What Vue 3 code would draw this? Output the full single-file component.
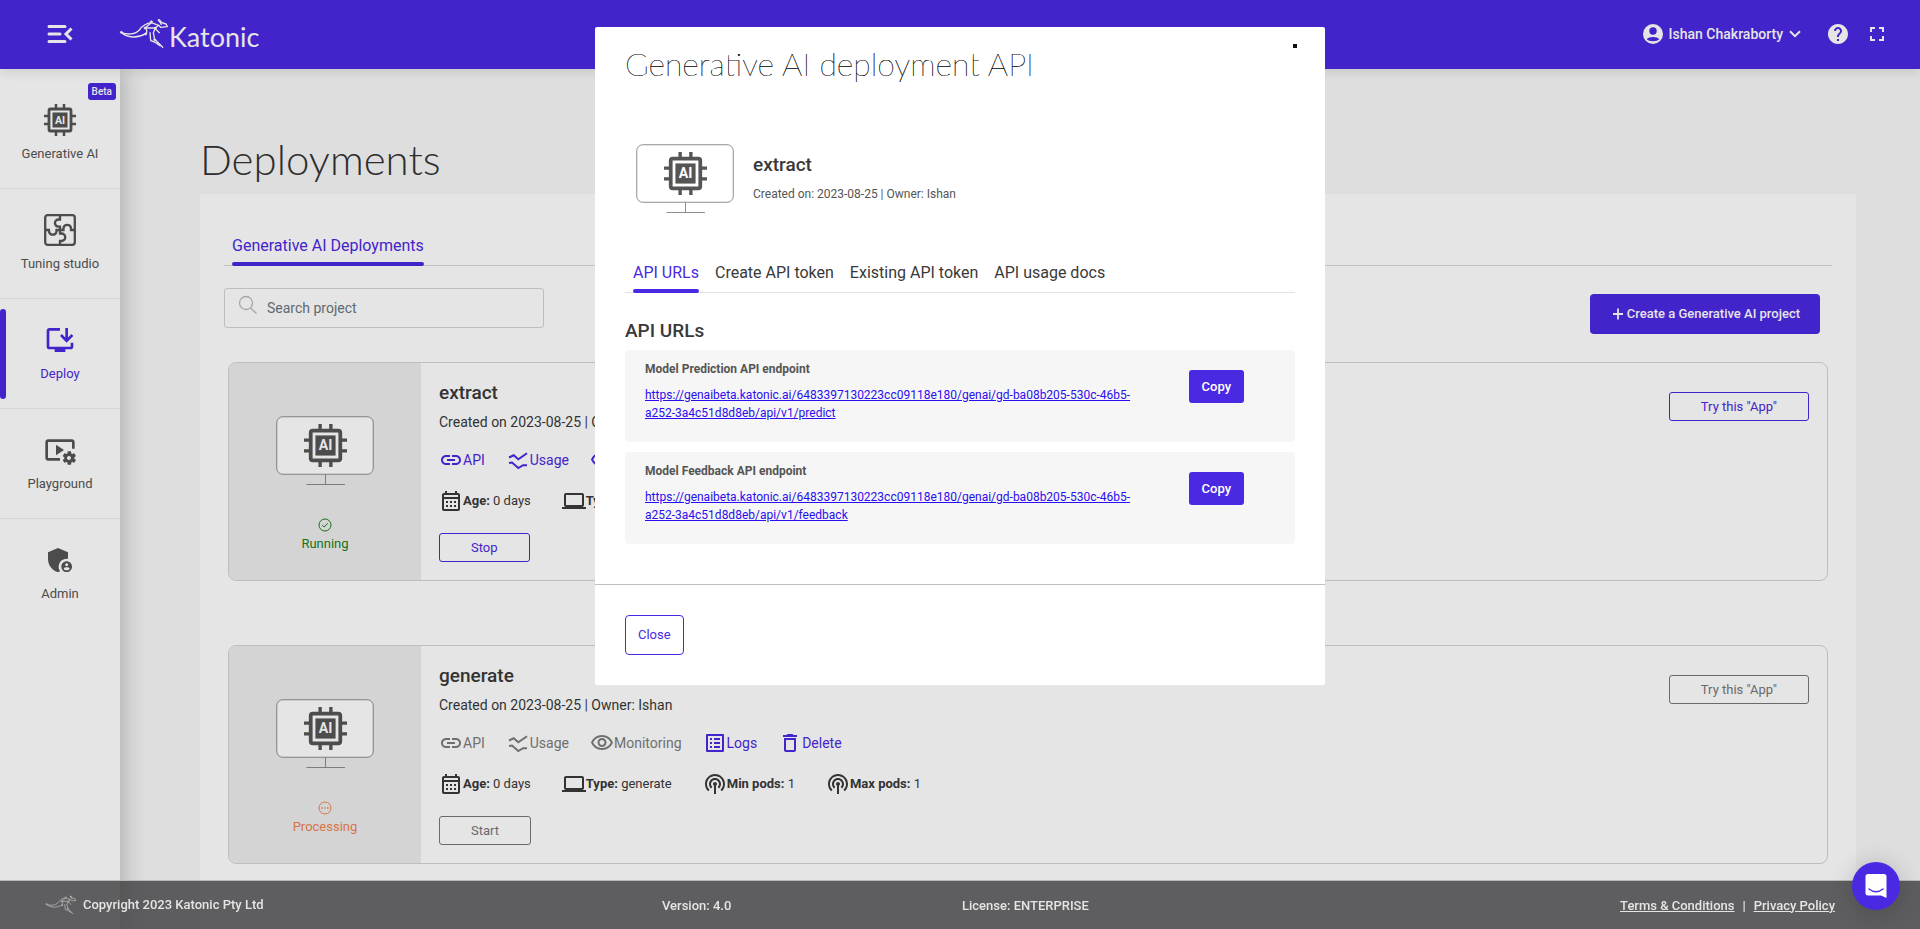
<script setup>
import { h, ref } from 'vue'

const paths = {
  link: ['M3.9 12c0-1.71 1.39-3.1 3.1-3.1h4V7H7c-2.76 0-5 2.24-5 5s2.24 5 5 5h4v-1.9H7c-1.71 0-3.1-1.39-3.1-3.1zM8 13h8v-2H8v2zm9-6h-4v1.9h4c1.71 0 3.1 1.39 3.1 3.1s-1.39 3.1-3.1 3.1h-4V17h4c2.76 0 5-2.24 5-5s-2.24-5-5-5z'],
  eye: ['M12 6c3.79 0 7.17 2.13 8.82 5.5C19.17 14.87 15.79 17 12 17s-7.17-2.13-8.82-5.5C4.83 8.13 8.21 6 12 6m0-2C7 4 2.73 7.11 1 11.5 2.73 15.89 7 19 12 19s9.27-3.11 11-7.5C21.27 7.11 17 4 12 4zm0 5c1.38 0 2.5 1.12 2.5 2.5S13.38 14 12 14s-2.5-1.12-2.5-2.5S10.62 9 12 9m0-2c-2.48 0-4.5 2.02-4.5 4.5S9.52 16 12 16s4.5-2.02 4.5-4.5S14.48 7 12 7z'],
  logs: ['M19 5v14H5V5h14m1.1-2H3.9c-.5 0-.9.4-.9.9v16.2c0 .4.4.9.9.9h16.2c.4 0 .9-.5.9-.9V3.9c0-.5-.5-.9-.9-.9zM11 7h6v2h-6V7zm0 4h6v2h-6v-2zm0 4h6v2h-6zM7 7h2v2H7zm0 4h2v2H7zm0 4h2v2H7z'],
  trash: ['M6 19c0 1.1.9 2 2 2h8c1.1 0 2-.9 2-2V7H6v12zM8 9h8v10H8V9zm7.5-5l-1-1h-5l-1 1H5v2h14V4z'],
  calendar: ['M19 4h-1V2h-2v2H8V2H6v2H5c-1.11 0-1.99.9-1.99 2L3 20c0 1.1.89 2 2 2h14c1.1 0 2-.9 2-2V6c0-1.1-.9-2-2-2zm0 16H5V10h14v10zm0-12H5V6h14v2zM9 14H7v-2h2v2zm4 0h-2v-2h2v2zm4 0h-2v-2h2v2zm-8 4H7v-2h2v2zm4 0h-2v-2h2v2zm4 0h-2v-2h2v2z'],
  laptop: ['M20 18c1.1 0 1.99-.9 1.99-2L22 6c0-1.1-.9-2-2-2H4c-1.1 0-2 .9-2 2v10c0 1.1.9 2 2 2H0v2h24v-2h-4zM4 6h16v10H4V6z'],
  pods: ['M14 12c0 .74-.4 1.38-1 1.72V22h-2v-8.28c-.6-.35-1-.98-1-1.72 0-1.1.9-2 2-2s2 .9 2 2zm-2-6c-3.31 0-6 2.69-6 6 0 1.74.75 3.31 1.94 4.4l1.42-1.42C8.53 14.25 8 13.19 8 12c0-2.21 1.79-4 4-4s4 1.79 4 4c0 1.19-.53 2.25-1.36 2.98l1.42 1.42C17.25 15.31 18 13.74 18 12c0-3.31-2.69-6-6-6zm0-4C6.48 2 2 6.48 2 12c0 2.85 1.2 5.41 3.11 7.24l1.42-1.42C4.98 16.36 4 14.29 4 12c0-4.41 3.59-8 8-8s8 3.59 8 8c0 2.29-.98 4.36-2.53 5.82l1.42 1.42C20.8 17.41 22 14.85 22 12c0-5.52-4.48-10-10-10z'],
  help: ['M12 2C6.48 2 2 6.48 2 12s4.48 10 10 10 10-4.48 10-10S17.52 2 12 2zm1 17h-2v-2h2v2zm2.07-7.75l-.9.92C13.45 12.9 13 13.5 13 15h-2v-.5c0-1.1.45-2.1 1.17-2.83l1.24-1.26c.37-.36.59-.86.59-1.41 0-1.1-.9-2-2-2s-2 .9-2 2H8c0-2.21 1.79-4 4-4s4 1.79 4 4c0 .88-.36 1.68-.93 2.25z'],
  fullscreen: ['M7 14H5v5h5v-2H7v-3zm-2-4h2V7h3V5H5v5zm12 7h-3v2h5v-5h-2v3zM14 5v2h3v3h2V5h-5z'],
  deploy: [
    'M20 17H4V5h8V3H4c-1.1 0-2 .9-2 2v12c0 1.1.9 2 2 2h4v2h8v-2h4c1.1 0 2-.9 2-2v-3h-2v3z',
    'M17 14l5-5-1.41-1.41L18 10.17V3h-2v7.17l-2.59-2.58L12 9z',
  ],
  playground: [
    'M3 6h18v5h2V6c0-1.1-.9-2-2-2H3c-1.1 0-2 .9-2 2v12c0 1.1.9 2 2 2h9v-2H3V6z',
    'M15 12l-6-4v8z',
    'M22.71 18.43c.03-.29.04-.58.01-.86l1.07-.85c.1-.08.12-.21.06-.32l-1.03-1.79c-.06-.11-.19-.15-.31-.11l-1.28.5c-.23-.17-.48-.31-.75-.42l-.2-1.36c-.01-.12-.12-.21-.24-.21h-2.07c-.12 0-.23.09-.25.21l-.2 1.36c-.26.11-.51.26-.74.42l-1.28-.5c-.12-.05-.25 0-.31.11l-1.03 1.79c-.06.11-.04.24.06.32l1.07.86c-.03.29-.04.58-.01.86l-1.07.85c-.1.08-.12.21-.06.32l1.03 1.79c.06.11.19.15.31.11l1.27-.5c.23.17.48.31.75.42l.2 1.36c.02.12.12.21.25.21h2.07c.12 0 .23-.09.25-.21l.2-1.36c.26-.11.51-.26.74-.42l1.28.5c.12.05.25 0 .31-.11l1.03-1.79c.06-.11.04-.24-.06-.32l-1.07-.86zM18.75 19.5c-.83 0-1.5-.67-1.5-1.5s.67-1.5 1.5-1.5 1.5.67 1.5 1.5-.67 1.5-1.5 1.5z',
  ],
  admin: [
    'M17 11c.34 0 .67.04 1 .09V6.27L10.5 3 3 6.27v4.91c0 4.54 3.2 8.79 7.5 9.82.55-.13 1.08-.32 1.6-.55-.69-.98-1.1-2.17-1.1-3.45 0-3.31 2.69-6 6-6z',
    'M17 13c-2.21 0-4 1.79-4 4s1.79 4 4 4 4-1.79 4-4-1.79-4-4-4zm0 1.38c.62 0 1.12.51 1.12 1.12s-.51 1.12-1.12 1.12-1.12-.51-1.12-1.12.5-1.12 1.12-1.12zm0 5.37c-.93 0-1.74-.46-2.24-1.17.05-.72 1.51-1.08 2.24-1.08s2.19.36 2.24 1.08c-.5.71-1.31 1.17-2.24 1.17z',
  ],
}

const strokes = {
  usage: { width: 2, d: 'M3 9.5L7.7 7.3L12.3 11.3L21 5.3M3 15L6 14.6L12.3 20L17 17.2H21' },
}

const Icon = (props) => {
  const stroke = strokes[props.name]
  const children = stroke
    ? [h('path', { d: stroke.d, fill: 'none', stroke: 'currentColor', 'stroke-width': stroke.width })]
    : paths[props.name].map((d) => h('path', { d }))
  return h(
    'svg',
    { viewBox: '0 0 24 24', width: props.size || 24, height: props.size || 24, fill: 'currentColor', 'aria-hidden': 'true' },
    children,
  )
}
Icon.props = ['name', 'size']

const chipShapes = () => [
  h('path', {
    d: 'M12 0V4M20 0V4M12 28V32M20 28V32M0 12H4M0 20H4M28 12H32M28 20H32',
    stroke: 'currentColor',
    'stroke-width': 2.5,
    fill: 'none',
  }),
  h('rect', { x: 5, y: 5, width: 22, height: 22, rx: 1.5, fill: 'none', stroke: 'currentColor', 'stroke-width': 2.8 }),
  h('rect', { x: 8.5, y: 8.5, width: 15, height: 15, fill: 'currentColor' }),
  h(
    'text',
    { x: 16, y: 19.6, 'text-anchor': 'middle', 'font-size': 10.5, 'font-weight': 700, 'font-family': 'Roboto, sans-serif', fill: '#fff' },
    'AI',
  ),
]

const Chip = () => h('svg', { viewBox: '0 0 32 32', width: 32, height: 32, 'aria-hidden': 'true' }, chipShapes())

const Monitor = () =>
  h('svg', { viewBox: '0 0 98 70', width: 98, height: 70, 'aria-hidden': 'true' }, [
    h('rect', { x: 0.75, y: 0.75, width: 96.5, height: 57.5, rx: 6, fill: '#fff', stroke: '#8c8c8c' }),
    h('path', { d: 'M49.5 58V68.5M30.5 68.5H69', stroke: '#8c8c8c', fill: 'none' }),
    h('svg', { x: 28, y: 8, width: 43, height: 43, viewBox: '0 0 32 32' }, chipShapes()),
  ])

const Kangaroo = (props) =>
  h('svg', { viewBox: '27 18 150 93', width: props.width, fill: 'none', stroke: 'currentColor', 'stroke-width': 4, 'stroke-linecap': 'round', 'stroke-linejoin': 'round', 'aria-hidden': 'true' }, [
    h('path', { d: 'M33 61C52 69 76 68 88 54C98 40 108 34 124 32L146 40' }),
    h('path', { d: 'M33 61C52 79 84 79 107 65' }),
    h('path', { d: 'M124 32L105 48H136L146 40L152 46L172 44L168 36L158 33L147 25L154 37' }),
    h('path', { d: 'M105 48C112 54 112 60 107 65M136 48L130 62L134 82L158 106M120 62L122 86L134 90L150 101M136 50L148 62' }),
    h('g', { fill: 'currentColor', 'stroke-width': 2 }, [
      h('circle', { cx: 34, cy: 61, r: 3 }),
      h('circle', { cx: 124, cy: 29, r: 3 }),
      h('circle', { cx: 105, cy: 48, r: 3 }),
      h('circle', { cx: 107, cy: 66, r: 3 }),
      h('circle', { cx: 136, cy: 48, r: 3 }),
      h('circle', { cx: 134, cy: 83, r: 3 }),
      h('circle', { cx: 147, cy: 25, r: 3 }),
    ]),
  ])
Kangaroo.props = ['width']

const menu = [
  { label: 'Generative AI', icon: 'chip', badge: 'Beta' },
  { label: 'Tuning studio', icon: 'puzzle' },
  { label: 'Deploy', icon: 'deploy', active: true },
  { label: 'Playground', icon: 'playground' },
  { label: 'Admin', icon: 'admin' },
]

const deployments = [
  { name: 'extract', running: true, status: 'Running', action: 'Stop' },
  { name: 'generate', running: false, status: 'Processing', action: 'Start' },
]

const actions = [
  { label: 'API', icon: 'link', needsRun: true },
  { label: 'Usage', icon: 'usage', needsRun: true },
  { label: 'Monitoring', icon: 'eye', needsRun: true },
  { label: 'Logs', icon: 'logs' },
  { label: 'Delete', icon: 'trash' },
]

const facts = (d) => [
  { label: 'Age:', value: '0 days', icon: 'calendar' },
  { label: 'Type:', value: d.name, icon: 'laptop' },
  { label: 'Min pods:', value: '1', icon: 'pods' },
  { label: 'Max pods:', value: '1', icon: 'pods' },
]

const tabs = ['API URLs', 'Create API token', 'Existing API token', 'API usage docs']
const base = 'https://genaibeta.katonic.ai/6483397130223cc09118e180/genai/gd-ba08b205-530c-46b5-a252-3a4c51d8d8eb/api/v1/'
const endpoints = [
  { title: 'Model Prediction API endpoint', url: base + 'predict' },
  { title: 'Model Feedback API endpoint', url: base + 'feedback' },
]

const activeTab = ref(tabs[0])
const open = ref(true)
const search = ref('')
</script>

<template>
  <div class="app">
    <header class="topbar">
      <button class="plain menu-toggle" type="button" aria-label="Toggle menu">
        <svg viewBox="0 0 26 20" width="26" height="20" fill="none" stroke="currentColor" stroke-width="3" stroke-linecap="round">
          <path d="M2 2.5H18M2 10H13M2 17.5H18" />
          <path d="M24.500 4.500L19 10L24.500 15.500" stroke-linecap="butt" />
        </svg>
      </button>
      <a class="logo" href="#">
        <Kangaroo :width="50" />
        <span>Katonic</span>
      </a>
      <div class="tools">
        <button class="plain user" type="button">
          <svg viewBox="0 0 24 24" width="24" height="24" aria-hidden="true">
            <circle cx="12" cy="12" r="10" fill="#fff" />
            <circle cx="12" cy="9" r="3.7" fill="#4b29e2" />
            <path d="M5.8 17.2C7.5 14.2 16.5 14.2 18.2 17.2C16.6 19.8 7.4 19.8 5.8 17.2Z" fill="#4b29e2" />
          </svg>
          <span>Ishan Chakraborty</span>
          <svg viewBox="0 0 12 8" width="12" height="8" fill="none" stroke="currentColor" stroke-width="2" aria-hidden="true">
            <path d="M1 1.200L6 6.200L11 1.200" />
          </svg>
        </button>
        <button class="plain help" type="button" aria-label="Help"><Icon name="help" /></button>
        <button class="plain" type="button" aria-label="Full screen"><Icon name="fullscreen" /></button>
      </div>
    </header>

    <div class="body">
      <nav class="sidebar">
        <a v-for="m in menu" :key="m.label" href="#" class="nav-item" :class="{ active: m.active }">
          <span v-if="m.badge" class="badge">{{ m.badge }}</span>
          <Chip v-if="m.icon === 'chip'" />
          <svg v-else-if="m.icon === 'puzzle'" viewBox="0 0 32 32" width="32" height="32" fill="none" stroke="currentColor" stroke-width="2.300" aria-hidden="true">
            <rect x="1.200" y="1.200" width="29.600" height="29.600" rx="2.500" />
            <path d="M16 1V5.500H14.500A3.600 3.600 0 0 0 14.500 12.700H16V16H12.500V17.500A3.800 3.800 0 0 1 5 17.500V16H1" />
            <path d="M16 31V27H17.500A3.600 3.600 0 0 0 17.500 19.500H16V16H19.500V14A3.800 3.800 0 0 1 27 14V16H31" />
          </svg>
          <Icon v-else :name="m.icon" :size="32" />
          <span>{{ m.label }}</span>
        </a>
      </nav>

      <main class="content">
        <h1>Deployments</h1>
        <section class="panel">
          <div class="tabs page-tabs">
            <button class="tab active" type="button">Generative AI Deployments</button>
          </div>
          <div class="toolbar">
            <label class="search">
              <svg viewBox="0 0 20 20" width="20" height="20" fill="none" stroke="currentColor" stroke-width="1.300" aria-hidden="true">
                <circle cx="8" cy="8" r="6.500" />
                <path d="M12.500 13L18.500 18.500" />
              </svg>
              <input v-model="search" type="text" placeholder="Search project" aria-label="Search project" />
            </label>
            <button class="create" type="button">
              <svg viewBox="0 0 10 12" width="10" height="12" stroke="currentColor" stroke-width="1.800" aria-hidden="true">
                <path d="M0 6H10M5 .5V11.500" />
              </svg>
              Create a Generative AI project
            </button>
          </div>

          <article v-for="d in deployments" :key="d.name" class="card">
            <div class="preview">
              <Monitor />
              <div class="status" :class="d.running ? 'ok' : 'pending'">
                <svg viewBox="0 0 14 14" width="14" height="14" fill="none" stroke="currentColor" aria-hidden="true">
                  <circle cx="7" cy="7" r="6" />
                  <path v-if="d.running" d="M4.200 7.200L6.200 9L9.800 5.200" />
                  <path v-else d="M3.500 7H5M6.300 7H7.800M9.100 7H10.600" stroke-width="1.500" />
                </svg>
                {{ d.status }}
              </div>
            </div>
            <div class="info">
              <h2>{{ d.name }}</h2>
              <p class="meta">Created on 2023-08-25 | Owner: Ishan</p>
              <div class="actions">
                <button v-for="a in actions" :key="a.label" class="plain action" type="button" :disabled="a.needsRun && !d.running">
                  <Icon :name="a.icon" />{{ a.label }}
                </button>
              </div>
              <div class="facts">
                <span v-for="f in facts(d)" :key="f.label" class="fact">
                  <Icon :name="f.icon" /><span><b>{{ f.label }}</b> {{ f.value }}</span>
                </span>
              </div>
              <button class="outline" type="button" :class="{ muted: !d.running }">{{ d.action }}</button>
            </div>
            <button class="outline try" type="button" :disabled="!d.running">Try this "App"</button>
          </article>
        </section>
      </main>
    </div>

    <footer class="footer">
      <span class="copyright"><Kangaroo :width="32" />Copyright 2023 Katonic Pty Ltd</span>
      <span>Version: 4.0</span>
      <span>License: ENTERPRISE</span>
      <span class="legal"><a href="#">Terms &amp; Conditions</a><i>|</i><a href="#">Privacy Policy</a></span>
    </footer>

    <div v-if="open" class="overlay">
      <div class="modal" role="dialog" aria-modal="true" aria-labelledby="modal-title">
        <button class="plain dismiss" type="button" aria-label="Dismiss" @click="open = false"></button>
        <div class="modal-body">
          <h2 id="modal-title" class="modal-title">Generative AI deployment API</h2>
          <div class="summary">
            <Monitor />
            <div>
              <h3>extract</h3>
              <p>Created on: 2023-08-25 | Owner: Ishan</p>
            </div>
          </div>
          <div class="tabs">
            <button v-for="t in tabs" :key="t" class="tab" type="button" :class="{ active: t === activeTab }" @click="activeTab = t">{{ t }}</button>
          </div>
          <h3 class="section-title">API URLs</h3>
          <div v-for="e in endpoints" :key="e.title" class="endpoint">
            <div class="endpoint-text">
              <h4>{{ e.title }}</h4>
              <a :href="e.url">{{ e.url }}</a>
            </div>
            <button class="copy" type="button">Copy</button>
          </div>
        </div>
        <div class="modal-footer">
          <button class="close" type="button" @click="open = false">Close</button>
        </div>
      </div>
    </div>

    <button class="chat" type="button" aria-label="Open chat">
      <svg viewBox="0 0 24 26" width="24" height="26" aria-hidden="true">
        <path d="M4 1H20Q22.500 1 22.500 3.500V25L17 22.500H4Q1.500 22.500 1.500 20V3.500Q1.500 1 4 1Z" fill="#fff" />
        <path d="M5 16Q12 21.500 19 16" fill="none" stroke="#4b29e2" stroke-width="1.500" stroke-linecap="round" />
      </svg>
    </button>
  </div>
</template>

<style>
body {
  margin: 0;
}
</style>

<style scoped>
.app {
  min-height: 100vh;
  display: flex;
  flex-direction: column;
  background: #f8f8f8;
  color: #393939;
  font-family: Roboto, 'Liberation Sans', sans-serif;
  font-size: 14px;
}
.app *,
.app {
  box-sizing: border-box;
}
h1, h2, h3, h4, p {
  margin: 0;
}
button {
  font-family: inherit;
  font-size: 13px;
  cursor: pointer;
}
svg {
  display: block;
  flex: none;
}
.plain {
  display: flex;
  align-items: center;
  padding: 0;
  border: 0;
  background: none;
  color: inherit;
}

.topbar {
  position: relative;
  z-index: 2;
  display: flex;
  align-items: center;
  height: 69px;
  padding: 0 31px 2px 47px;
  background: #4b29e2;
  color: #fff;
  box-shadow: 0 2px 12px rgba(0, 0, 0, 0.12);
}
.logo {
  display: flex;
  align-items: flex-end;
  margin-left: 46px;
  color: #fff;
  font-family: Lato, sans-serif;
  font-size: 27px;
  line-height: 24px;
  text-decoration: none;
}
.tools {
  display: flex;
  align-items: center;
  margin-left: auto;
}
.user {
  font-size: 14px;
  font-weight: 500;
}
.user span {
  margin: 0 6px 0 4px;
}
.help {
  margin: 0 15px 0 25px;
}

.body {
  flex: 1;
  display: flex;
}
.sidebar {
  position: relative;
  z-index: 1;
  flex: none;
  width: 120px;
  padding-top: 10px;
  background: #fff;
  box-shadow: 2px 0 24px rgba(0, 0, 0, 0.25);
}
.nav-item {
  position: relative;
  display: flex;
  flex-direction: column;
  align-items: center;
  gap: 8px;
  height: 110px;
  padding-top: 25px;
  border-bottom: 1px solid #efefef;
  color: #555;
  font-size: 13px;
  line-height: 20px;
  text-decoration: none;
}
.nav-item:last-child {
  border-bottom: 0;
}
.nav-item.active {
  color: #4b29e2;
}
.nav-item.active::before {
  content: '';
  position: absolute;
  left: 0;
  top: 10px;
  bottom: 9px;
  width: 6px;
  border-radius: 3px;
  background: #4b29e2;
}
.badge {
  position: absolute;
  top: 4px;
  right: 4px;
  padding: 0 4px;
  border-radius: 3px;
  background: #4b29e2;
  color: #fff;
  font-size: 10px;
  font-weight: 500;
  line-height: 17px;
}

.content {
  flex: 1;
  display: flex;
  flex-direction: column;
  padding: 0 64px 0 80px;
}
h1 {
  padding: 65px 0 10px;
  color: #333;
  font-family: Lato, sans-serif;
  font-size: 42px;
  font-weight: 300;
  line-height: 50px;
}
.panel {
  flex: 1;
  padding: 40px 28px 65px;
  background: #fff;
}
.tabs {
  display: flex;
  gap: 16px;
  padding: 0 8px;
  border-bottom: 1px solid #dee2e6;
}
.page-tabs {
  margin: 0 -4px;
  border-color: #d8d8da;
}
.tab {
  margin-bottom: -1px;
  padding: 0 0 5px;
  border: 0;
  background: none;
  color: #393939;
  font-size: 16px;
  line-height: 24px;
}
.tab.active {
  color: #4b29e2;
}
.tab::after {
  content: '';
  display: block;
  height: 4px;
  margin: 4px 0 -5px;
  border-radius: 2px;
}
.tab.active::after {
  background: #4b29e2;
}
.toolbar {
  display: flex;
  justify-content: space-between;
  align-items: flex-start;
  margin: 22px 8px 28px -4px;
}
.search {
  display: flex;
  align-items: center;
  gap: 9px;
  width: 320px;
  height: 40px;
  padding: 0 13px;
  border: 1px solid #d4d4d4;
  border-radius: 3px;
  color: #bbb;
}
.search svg {
  margin-bottom: 6px;
}
.search input {
  flex: 1;
  min-width: 0;
  padding: 0;
  border: 0;
  outline: 0;
  background: none;
  color: #393939;
  font-family: inherit;
  font-size: 14px;
}
.search input::placeholder {
  color: #6c757d;
  opacity: 1;
}
.create {
  display: flex;
  align-items: center;
  gap: 4px;
  height: 40px;
  margin-top: 6px;
  padding: 0 20px 1px 23px;
  border: 0;
  border-radius: 4px;
  background: #4b29e2;
  color: #fff;
  font-weight: 500;
}

.card {
  display: flex;
  overflow: hidden;
  border: 1px solid #d4d4d4;
  border-radius: 8px;
}
.card + .card {
  margin-top: 64px;
}
.preview {
  flex: none;
  display: flex;
  flex-direction: column;
  align-items: center;
  gap: 32px;
  width: 192px;
  padding-top: 53px;
  background: #ededed;
  color: #555;
}
.status {
  display: flex;
  flex-direction: column;
  align-items: center;
  gap: 4px;
  font-size: 13px;
  line-height: 16px;
}
.ok {
  color: #18801c;
}
.pending {
  color: #f0824f;
}
.info {
  flex: 1;
  padding: 18px;
}
.info h2,
.summary h3 {
  font-size: 19px;
  font-weight: 500;
  line-height: 24px;
}
.meta {
  margin-top: 7px;
  line-height: 20px;
}
.actions {
  display: flex;
  gap: 21px;
  margin-top: 16px;
}
.action {
  color: #4b29e2;
  font-size: 14px;
  line-height: 24px;
}
.action:disabled {
  color: #7c7c7c;
}
.facts {
  display: flex;
  gap: 31px;
  margin: 17px 0 20px;
}
.fact {
  display: flex;
  align-items: flex-start;
  font-size: 13px;
  line-height: 23px;
}
.fact b {
  font-weight: 700;
}
.outline {
  height: 29px;
  padding: 0 31px;
  border: 1px solid #4b29e2;
  border-radius: 3px;
  background: none;
  color: #4b29e2;
}
.outline.muted,
.outline:disabled {
  border-color: #767676;
  color: #767676;
}
.try {
  margin: 29px 18px 0 0;
}

.footer {
  position: fixed;
  left: 0;
  right: 0;
  bottom: 0;
  z-index: 3;
  display: grid;
  grid-template-columns: 617fr 300fr 873fr;
  grid-auto-flow: column;
  grid-template-columns: 617fr 300fr 436fr 437fr;
  align-items: center;
  height: 49px;
  padding: 0 85px 0 45px;
  border-top: 1px solid #ccc;
  background: rgba(67, 67, 70, 0.8);
  background-clip: padding-box;
  color: #fff;
  font-size: 13px;
  font-weight: 500;
}
.copyright {
  display: flex;
  align-items: center;
  gap: 6px;
}
.copyright svg {
  opacity: 0.6;
}
.legal {
  text-align: right;
}
.legal a {
  color: inherit;
}
.legal i {
  margin: 0 8px;
  font-style: normal;
}

.overlay {
  position: fixed;
  inset: 0;
  z-index: 10;
  padding-top: 27px;
  background: rgba(0, 0, 0, 0.1);
}
.modal {
  position: relative;
  width: 730px;
  max-width: 100%;
  margin: 0 auto;
  border-radius: 2px;
  background: #fff;
}
.dismiss {
  position: absolute;
  top: 17px;
  right: 28px;
  width: 4px;
  height: 4px;
  background: #111;
}
.modal-body {
  padding: 17px 30px 40px;
}
.modal-title {
  color: #222;
  font-family: Lato, sans-serif;
  font-size: 32px;
  font-weight: 200;
  line-height: 40px;
  text-shadow: 0 0 0 #222, 0 0 0 #222;
}
.summary {
  display: flex;
  gap: 19px;
  margin: 60px 0 47px 11px;
  color: #555;
}
.summary h3 {
  margin-top: 9px;
  color: #393939;
}
.summary p {
  margin-top: 8px;
  font-size: 12px;
  line-height: 18px;
}
.section-title {
  margin: 26px 0 7px;
  font-size: 19px;
  font-weight: 500;
  line-height: 24px;
}
.endpoint {
  display: flex;
  align-items: flex-start;
  gap: 44px;
  padding: 10px 51px 20px 20px;
  border-radius: 4px;
  background: #f6f6f6;
}
.endpoint + .endpoint {
  margin-top: 10px;
}
.endpoint-text {
  flex: 1;
  font-size: 12px;
  line-height: 18px;
}
.endpoint h4 {
  margin-bottom: 8px;
  color: #555;
  font-size: 12px;
  font-weight: 700;
}
.endpoint a {
  display: block;
  color: #2a0df0;
}
.copy {
  height: 33px;
  margin-top: 10px;
  padding: 0 13px;
  border: 0;
  border-radius: 3px;
  background: #4b29e2;
  color: #fff;
  font-weight: 500;
}
.modal-footer {
  padding: 30px;
  border-top: 1px solid #bfbfbf;
}
.close {
  height: 40px;
  padding: 0 12px 1px;
  border: 1px solid #4b29e2;
  border-radius: 4px;
  background: #fff;
  color: #4b29e2;
}

.chat {
  position: fixed;
  right: 20px;
  bottom: 19px;
  z-index: 11;
  display: flex;
  align-items: center;
  justify-content: center;
  width: 48px;
  height: 48px;
  padding: 0;
  border: 0;
  border-radius: 50%;
  background: #4b29e2;
  box-shadow: 0 2px 24px rgba(0, 0, 0, 0.18);
}
</style>
